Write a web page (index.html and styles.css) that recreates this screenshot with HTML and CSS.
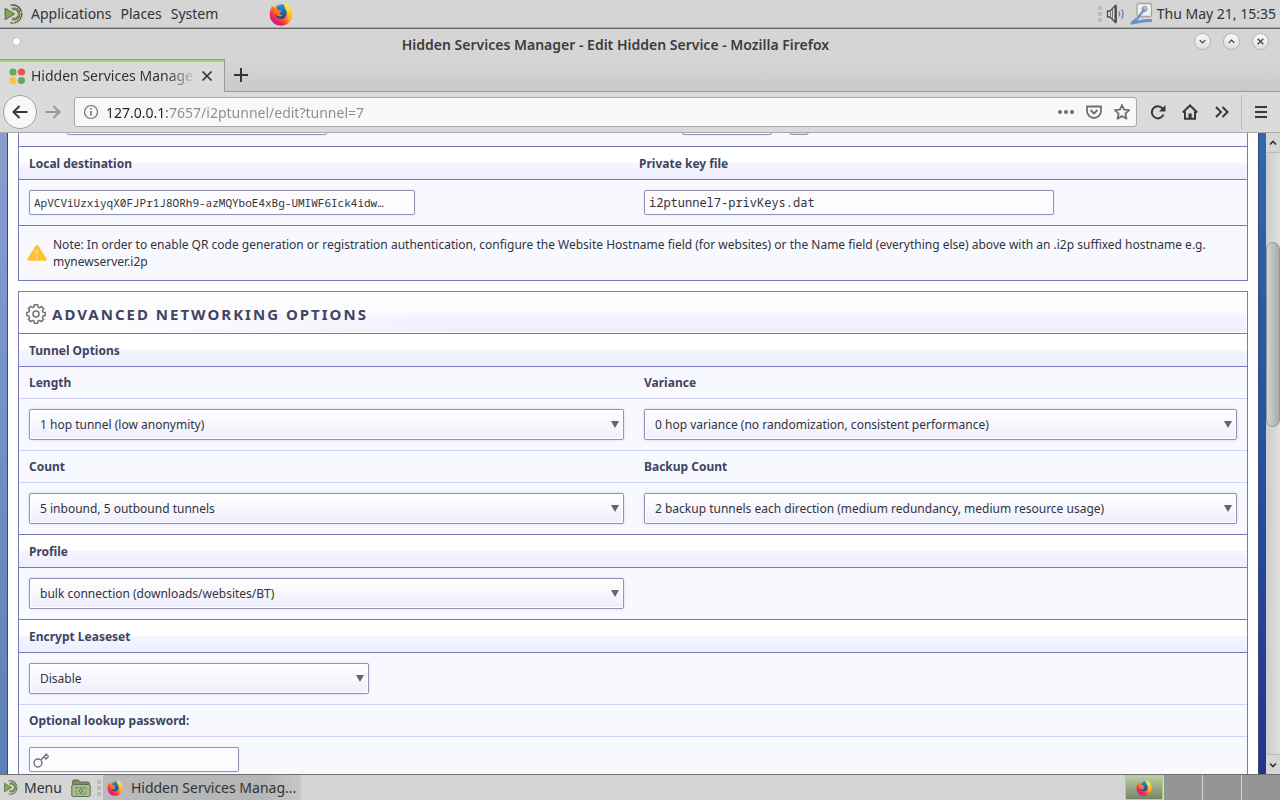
FILE: index.html
```html
<!DOCTYPE html>
<html lang="en">
<head>
<meta charset="utf-8">
<title>Hidden Services Manager - Edit Hidden Service</title>
<link rel="stylesheet" href="styles.css">
</head>
<body>
<svg class="defs" aria-hidden="true">
  <defs>
    <linearGradient id="flame" x1="0.85" y1="0.1" x2="0.2" y2="0.9">
      <stop offset="0" stop-color="#fff24a"/><stop offset="0.3" stop-color="#ffb627"/><stop offset="0.55" stop-color="#ff6a2b"/><stop offset="0.8" stop-color="#f5274f"/><stop offset="1" stop-color="#c01a9a"/>
    </linearGradient>
    <linearGradient id="globe" x1="0" y1="0" x2="0" y2="1">
      <stop offset="0" stop-color="#1c9cf0"/><stop offset="1" stop-color="#123a8c"/>
    </linearGradient>
    <linearGradient id="sun" x1="0" y1="0" x2="0" y2="1">
      <stop offset="0" stop-color="#fff04a"/><stop offset="1" stop-color="#ff9d1e"/>
    </linearGradient>
  </defs>
  <symbol id="firefox" viewBox="0 0 24 24">
    <path d="M2.6 3.2 4.8 5.6 6.4 4.6 8 2.2 10 4.2 16 1C20.500 3 23.500 7.500 23.300 12.500A11.300 11.300 0 0 1 .7 12.500C.7 9 1.600 7 2.600 5.500z" fill="url(#flame)"/>
    <path d="M8 4.500C10 2.600 13.500 1.600 15.500 2.800 15 5 17 6.500 17.600 9.500 18.200 14 15 17 11.800 16.800 8.500 16.600 6.800 14.500 6.600 12.500L10.500 12.200 11.800 9.600 8 8z" fill="url(#globe)"/>
    <path d="M15.500.8C20.500 2.500 23.500 7 23.300 12.500 23 16.500 20.500 20 17.500 21.200 20 17 19.800 12.500 18 9.500 17 7.500 14.500 5 15.500.8z" fill="url(#sun)"/>
    <path d="M4.800 8C6.500 6.300 8.500 7 9.300 8L12.300 8.600C12.500 10 10.800 10.600 10.200 11.200 9.800 12.300 11 13.500 14 12.400 13 15 9.500 15 7.500 13z" fill="#ff7c24"/>
  </symbol>
  <symbol id="mate" viewBox="0 0 20 20">
    <path d="M6 1.300A9 9 0 1 1 6 18.700" fill="none" stroke="#55663f" stroke-width="1.500" stroke-dasharray="14 1"/>
    <path d="M7.500 5.200A5.200 5.200 0 1 1 7.500 14.800" fill="none" stroke="#55663f" stroke-width="2.600"/>
    <path d="M7.500 5.200A5.200 5.200 0 1 1 7.500 14.800" fill="none" stroke="#8db05c" stroke-width="1"/>
    <path d="M.7 4.200 10 10 .7 15.800z" fill="#87a556" stroke="#55663f" stroke-width="1"/>
  </symbol>
</svg>

<header class="desktop-panel">
  <nav class="desktop-menu">
    <svg class="mate-icon"><use href="#mate"/></svg>
    <button>Applications</button><button>Places</button><button>System</button>
  </nav>
  <button class="launcher" aria-label="Firefox"><svg><use href="#firefox"/></svg></button>
  <div class="tray">
    <span class="grip"><i></i><i></i><i></i></span>
    <svg class="tray-icon" viewBox="0 0 20 20">
      <path d="M1.500 7H4L9.500 1.500V18.500L4 13H1.500z" fill="#ddd" stroke="#4b4d48" stroke-width="1.300"/>
      <path d="M4.500 7V13M6.500 5V15" stroke="#72746c"/><path d="M9.700 1.500V18.500" stroke="#4b4d48" stroke-width="2.400"/>
      <path d="M13 7.500Q14.500 10 13 12.500M15.500 5.500Q18.500 10 15.500 14.500" fill="none" stroke="#5f84b8" stroke-width="1.300"/>
    </svg>
    <svg class="pen-icon" viewBox="0 0 24 24">
      <rect x="7" y="1.500" width="14.500" height="13" rx="1.500" fill="#f0f0ee" stroke="#a5a5a3" stroke-width="1.300"/>
      <circle cx="14.500" cy="7" r="2.500" fill="#ccc" stroke="#888"/>
      <path d="M14.500 7 7 17" fill="none" stroke="#6b93c4" stroke-width="2.400"/>
      <path d="M7 17 2 21C8 20.500 13 18 22 18.500" fill="none" stroke="#6b93c4" stroke-width="3" stroke-linejoin="round"/>
    </svg>
    <time>Thu May 21, 15:35</time>
  </div>
</header>

<div class="titlebar">
  <span class="pin"></span>
  <h1>Hidden Services Manager - Edit Hidden Service - Mozilla Firefox</h1>
  <div class="window-buttons">
    <button aria-label="Minimize"><svg viewBox="0 0 16 16"><path d="M5 6.500 8 9.500 11 6.500"/></svg></button>
    <button aria-label="Maximize"><svg viewBox="0 0 16 16"><path d="M5 9.500 8 6.500 11 9.500"/></svg></button>
    <button aria-label="Close"><svg viewBox="0 0 16 16"><path d="M5 5 11 11M11 5 5 11"/></svg></button>
  </div>
</div>

<div class="tabs">
  <div class="tab">
    <svg class="favicon" viewBox="0 0 16 16"><circle cx="4" cy="4" r="3.600" fill="#60ab60"/><circle cx="12.500" cy="4" r="3.600" fill="#e3564a"/><circle cx="4" cy="12.500" r="3.600" fill="#fdc436"/><circle cx="12.500" cy="12.500" r="3.600" fill="#60ab60"/></svg>
    <span class="tab-title">Hidden Services Manage</span>
    <button aria-label="Close tab"><svg viewBox="0 0 16 16"><path d="M3.500 3.500 12.500 12.500M12.500 3.500 3.500 12.500"/></svg></button>
  </div>
  <button class="new-tab" aria-label="New tab"><svg viewBox="0 0 16 16"><path d="M8 1V15M1 8H15"/></svg></button>
</div>

<div class="toolbar">
  <button class="back" aria-label="Back"><svg viewBox="0 0 16 16"><path d="M15.500 8H1.500M7.500 2 1.500 8 7.500 14"/></svg></button>
  <button class="forward" aria-label="Forward" disabled><svg viewBox="0 0 16 16"><path d="M.5 8H14.500M8.500 2 14.500 8 8.500 14"/></svg></button>
  <div class="url-box">
    <svg viewBox="0 0 16 16"><circle cx="8" cy="8" r="6.500" stroke-width="1.200"/><path d="M8 7V11.500M8 4V5.600" stroke-width="1.600"/></svg>
    <input class="url" aria-label="Address" value="127.0.0.1:7657/i2ptunnel/edit?tunnel=7">
    <button aria-label="Page actions"><svg viewBox="0 0 16 16"><g fill="#6f6f6f" stroke="none"><circle cx="2" cy="8" r="2"/><circle cx="8" cy="8" r="2"/><circle cx="14" cy="8" r="2"/></g></svg></button>
    <button aria-label="Pocket"><svg viewBox="0 0 16 16"><path d="M1 2.500H15V7A7 7 0 0 1 1 7zM4.500 6 8 9.500 11.500 6" stroke-linejoin="round"/></svg></button>
    <button aria-label="Bookmark"><svg viewBox="0 0 16 16"><path d="M8 1 10.100 5.600 15.200 6.200 11.400 9.600 12.500 14.700 8 12.100 3.500 14.700 4.600 9.600.8 6.200 5.900 5.600z" stroke-linejoin="round"/></svg></button>
  </div>
  <div class="tools">
    <button aria-label="Reload"><svg viewBox="0 0 16 16"><path d="M13.500 10.500A6 6 0 1 1 12.500 4.500L14 6.300" /><path d="M15.500 1V7.500H9z" fill="#393939" stroke="none"/></svg></button>
    <button aria-label="Home"><svg viewBox="0 0 16 16"><path d="M.8 8.500 8 1.500 15.200 8.500M3 7.500V14.800H13V7.500"/><path d="M6.500 15V9.500H9.700V15z" fill="#393939" stroke="none"/></svg></button>
    <button aria-label="More tools"><svg viewBox="0 0 16 16"><path d="M2 3 7 8 2 13M8.500 3 13.500 8 8.500 13"/></svg></button>
  </div>
  <button class="app-menu" aria-label="Menu"><svg viewBox="0 0 16 16"><path d="M2 3H14M2 8H14M2 13H14"/></svg></button>
</div>

<div class="viewport">
  <main class="page">
    <section class="panel">
      <div class="row previous">
        <div class="cell"><input class="field host" aria-label="Host"></div>
        <div class="cell"><input class="field port" aria-label="Port"><input type="checkbox" class="ssl" aria-label="Use SSL"></div>
      </div>
      <div class="row bar">
        <label for="dest">Local destination</label>
        <label for="key" class="pulled">Private key file</label>
      </div>
      <div class="row">
        <div class="cell"><input class="field dest" id="dest" readonly value="ApVCViUzxiyqX0FJPr1J8ORh9-azMQYboE4xBg-UMIWF6Ick4idw…"></div>
        <div class="cell"><input class="field key" id="key" value="i2ptunnel7-privKeys.dat"></div>
      </div>
      <div class="note">
        <svg viewBox="0 0 20 20"><path d="M10 3 18.500 16.500H1.500z" fill="#ffc233" stroke="#ffc233" stroke-width="2.500" stroke-linejoin="round"/><path d="M10 6.500V11.500M10 13V15" stroke="#e8d9b8" stroke-width="1.800"/></svg>
        <p>Note: In order to enable QR code generation or registration authentication, configure the Website Hostname field (for websites) or the Name field (everything else) above with an .i2p suffixed hostname e.g. mynewserver.i2p</p>
      </div>
    </section>

    <section class="panel">
      <h2>
        <svg viewBox="0 0 20 20"><path d="M8.300.8H11.700L12.200 3.200 13.500 3.800 15.600 2.500 17.700 4.700 16.400 6.700 17 8.200 19.300 8.600V11.500L17 12 16.400 13.500 17.600 15.400 15.400 17.600 13.500 16.400 12 17 11.600 19.300H8.500L8 17 6.500 16.400 4.600 17.600 2.400 15.400 3.600 13.500 3 12 .7 11.500V8.500L3 8.100 3.600 6.500 2.400 4.600 4.600 2.400 6.500 3.600 7.900 3z" stroke-linejoin="round"/><circle cx="10" cy="10" r="3"/></svg>
        Advanced Networking Options
      </h2>
      <div class="row bar"><h3>Tunnel Options</h3></div>
      <div class="row names">
        <label for="length">Length</label><label for="variance">Variance</label>
      </div>
      <div class="row">
        <div class="cell"><span class="select"><select id="length"><option>1 hop tunnel (low anonymity)</option></select></span></div>
        <div class="cell"><span class="select"><select id="variance"><option>0 hop variance (no randomization, consistent performance)</option></select></span></div>
      </div>
      <div class="row names">
        <label for="count">Count</label><label for="backup">Backup Count</label>
      </div>
      <div class="row">
        <div class="cell"><span class="select"><select id="count"><option>5 inbound, 5 outbound tunnels</option></select></span></div>
        <div class="cell"><span class="select"><select id="backup"><option>2 backup tunnels each direction (medium redundancy, medium resource usage)</option></select></span></div>
      </div>
      <div class="row bar"><label for="profile">Profile</label></div>
      <div class="row">
        <div class="cell"><span class="select"><select id="profile"><option>bulk connection (downloads/websites/BT)</option></select></span></div>
      </div>
      <div class="row bar"><label for="encrypt">Encrypt Leaseset</label></div>
      <div class="row">
        <div class="cell"><span class="select short"><select id="encrypt"><option>Disable</option></select></span></div>
      </div>
      <div class="row names"><label for="password">Optional lookup password:</label></div>
      <div class="row">
        <div class="cell"><span class="secret">
          <input type="password" class="field" id="password">
          <svg viewBox="0 0 16 16"><circle cx="5" cy="11" r="4"/><path d="M8 8 14 1.500M11 4.800 13 7 15.500 4.500 13.200 2.300"/></svg>
        </span></div>
      </div>
    </section>
  </main>
  <div class="scrollbar" aria-hidden="true">
    <span class="step"><svg viewBox="0 0 8 8"><path d="M1 5.500 4 2.500 7 5.500"/></svg></span>
    <span class="track"><span class="thumb"></span></span>
    <span class="step"><svg viewBox="0 0 8 8"><path d="M1 2.500 4 5.500 7 2.500"/></svg></span>
  </div>
</div>

<footer class="taskbar">
  <button class="menu-button"><svg><use href="#mate"/></svg>Menu</button>
  <button class="files" aria-label="Files"><svg viewBox="0 0 20 18"><path d="M1.500 4V2.500Q1.500 1 3 1H7.500L9 3H17Q18.500 3 18.500 4.500V6H1.500z" fill="#75935d" stroke="#5c7050"/><rect x=".8" y="5.500" width="18.400" height="12" rx="1.500" fill="#a5bf8f" stroke="#5c7050"/><rect x="5" y="8.500" width="10" height="6.500" fill="none" stroke="#5f774e" stroke-dasharray="2 1.500"/><circle cx="10" cy="11.700" r="1.700" fill="none" stroke="#5f774e"/></svg></button>
  <span class="grip"><i></i><i></i><i></i></span>
  <button class="task"><svg><use href="#firefox"/></svg><span>Hidden Services Manag...</span></button>
  <div class="workspaces">
    <button class="current" aria-label="Workspace 1"><svg><use href="#firefox"/></svg></button>
    <button aria-label="Workspace 2"></button><button aria-label="Workspace 3"></button><button aria-label="Workspace 4"></button>
  </div>
</footer>
</body>
</html>
```
FILE: styles.css
```css
* { box-sizing: border-box; }

body {
  margin: 0;
  height: 100vh;
  display: flex;
  flex-direction: column;
  overflow: hidden;
  background: #d6d6d6;
  color: #2e3436;
  font: 15px/20px "Noto Sans", sans-serif;
}

button {
  display: flex;
  align-items: center;
  justify-content: center;
  margin: 0;
  padding: 0;
  border: 0;
  background: none;
  color: inherit;
  font: inherit;
}

svg { flex: none; display: block; }
.defs { position: absolute; width: 0; height: 0; }

/* desktop panel */
.desktop-panel {
  flex: none;
  display: flex;
  align-items: center;
  height: 28px;
  padding: 0 4px;
  background: #d5d5d5;
  border-bottom: 1px solid #aaa;
  font-size: 14px;
}
.desktop-menu { display: flex; align-items: center; gap: 9px; }
.mate-icon { width: 21px; height: 20px; margin-right: -3px; }
.launcher { margin-left: 51px; }
.launcher svg { width: 24px; height: 24px; }
.tray { display: flex; align-items: center; margin-left: auto; }
.grip { display: grid; gap: 2px; }
.grip i { width: 4px; height: 4px; background: #bcbcbc; }
.tray-icon { width: 20px; height: 20px; margin-left: 4px; }
.pen-icon { width: 24px; height: 24px; margin: 0 3px 0 4px; }

/* window title */
.titlebar {
  flex: none;
  display: grid;
  grid-template-columns: 1fr auto 1fr;
  align-items: center;
  height: 31px;
  border-top: 1px solid #666;
  padding: 0 11px 0 12px;
  background: #d5d5d5;
}
.pin { width: 9px; height: 9px; margin-bottom: 6px; border: 1px solid #bbb; border-radius: 50%; background: #fff; }
.titlebar h1 { margin: 2px 50px 0 0; font-size: 14px; line-height: 20px; font-weight: 600; color: #3c3c3c; }
.window-buttons { display: flex; justify-content: flex-end; gap: 12px; margin-bottom: 5px; }
.window-buttons button {
  width: 17px;
  height: 17px;
  border: 1px solid #b0b0b0;
  border-radius: 50%;
  background: linear-gradient(#fafafa, #dedede);
}
.window-buttons svg { width: 15px; height: 15px; fill: none; stroke: #444; stroke-width: 1.4; }

/* tabs */
.tabs { flex: none; display: flex; height: 33px; background: linear-gradient(#d5d5d5, #c9c9c9); }
.tabs::after { content: ""; flex: 1; border-bottom: 1px solid #999; }
.tab {
  display: flex;
  align-items: center;
  width: 225px;
  padding: 0 9px;
  border-top: 1px solid #999;
  border-right: 1px solid #999;
  background: #dadada;
  box-shadow: inset 0 2px #a9cd7f;
}
.favicon { width: 16px; height: 16px; }
.tab-title {
  flex: 1;
  margin: 0 2px 0 6px;
  white-space: nowrap;
  font-size: 14px;
  -webkit-mask-image: linear-gradient(90deg, #000 82%, transparent);
  mask-image: linear-gradient(90deg, #000 82%, transparent);
}
.tab button svg { width: 16px; height: 16px; stroke: #333; stroke-width: 1.7; }
.new-tab { width: 31px; border-bottom: 1px solid #999; }
.new-tab svg { width: 16px; height: 16px; stroke: #333; stroke-width: 2; }

/* navigation */
.toolbar {
  flex: none;
  display: flex;
  align-items: center;
  height: 41px;
  padding: 0 0 0 3px;
  background: #dbdbdb;
  border-bottom: 1px solid #aaa;
}
.toolbar svg { width: 16px; height: 16px; fill: none; stroke: #393939; stroke-width: 2; }
.back { width: 34px; height: 34px; border: 1px solid #a2a2a2; border-radius: 50%; background: #f8f8f8; }
.forward { margin: 0 13px 0 8px; }
.forward svg { stroke: #989898; }
.url-box {
  flex: 1;
  display: flex;
  align-items: center;
  gap: 12px;
  height: 30px;
  padding: 0 6px 0 8px;
  border: 1px solid #a8a8a8;
  border-radius: 3px;
  background: #f8f8f8;
}
.toolbar .url-box svg { stroke: #6f6f6f; stroke-width: 1.8; }
.url {
  flex: 1;
  min-width: 0;
  margin-left: -5px;
  padding: 2px 0 0;
  border: 0;
  outline: 0;
  font: 14px/20px "Noto Sans", sans-serif;
  color: transparent;
  background: linear-gradient(90deg, #222 61px, #8c8c8c 61px);
  -webkit-background-clip: text;
  background-clip: text;
}
.tools { display: flex; gap: 16px; padding: 0 11px 0 13px; }
.app-menu { width: 39px; height: 34px; border-left: 1px solid #b9b9b9; }

/* web page */
.viewport { flex: 1; min-height: 0; display: flex; overflow: hidden; }
.page {
  flex: 1;
  min-width: 0;
  display: flex;
  flex-direction: column;
  padding: 0 8px;
  color: #33333c;
  font-size: 12px;
  line-height: 17px;
  background:
    linear-gradient(#8b9dcf, #7292c5 45%, #5b7fb8) left / 50% 100% no-repeat,
    linear-gradient(#2e69ad, #2254a2 48%, #22348f) right / 50% 100% no-repeat;
}
.panel {
  flex: none;
  margin: 0 10px 10px;
  border: 1px solid #7778c0;
  outline: 10px solid #fff;
  background: #f8f9ff;
  box-shadow: 0 0 0 11px #454573;
  clip-path: inset(-10px -11px);
}
.panel:first-child { border-top: 0; }
.row { display: grid; grid-template-columns: 615fr 613fr; border-top: 1px solid #7778c0; }
.cell { padding: 10px; display: flex; align-items: center; }
.names { border-top-color: #cfd0f8; }
.names + .row { border-top-color: #cfd0f8; }
.row label, .row h3 { margin: 0; padding: 7px 10px; font-size: 12px; line-height: 17px; font-weight: 700; color: #41445f; }
.bar { background: linear-gradient(#fff 50%, #f5f5ff 50%, #eeedfd); }
.row.bar label, .row.bar h3 { padding: 8px 10px 7px; }
.row.bar .pulled { padding-left: 5px; }
.bar + .names { border-top-color: #7778c0; }

.field {
  height: 25px;
  padding: 0 4px;
  border: 1px solid #9292b5;
  border-radius: 2px;
  background: #fcfcff;
  box-shadow: 0 0 2px #d8d8f6;
  color: #33333c;
  font: 12px/17px "Noto Sans Mono", "DejaVu Sans Mono", monospace;
}
.previous { margin-top: -33px; border-top: 0; }
.previous .cell { padding-bottom: 11px; }
.host { width: 260px; margin-left: 38px; }
.port { width: 90px; margin-left: 38px; }
.ssl { appearance: none; width: 20px; height: 25px; margin: 0 0 0 17px; border: 1px solid #9292b5; border-radius: 3px; background: #dcdcf0; align-self: flex-end; }
.dest { width: 386px; font-size: 11px; }
.key { width: 410px; }

.note { display: flex; align-items: center; gap: 6px; padding: 10px 8px; border-top: 1px solid #7778c0; }
.note svg { width: 20px; height: 20px; }
.note p { margin: 0; }

.panel h2 {
  display: flex;
  align-items: center;
  gap: 6px;
  height: 41px;
  margin: 0;
  padding: 2px 6px 0;
  border: 1px solid #fff;
  background:
    linear-gradient(90deg, #fcfcff 8%, #fcfcff00 36%),
    linear-gradient(#fcfcff 51%, #f5f5ff 51%, #eeedfd);
  color: #41445f;
  font-size: 15px;
  line-height: 22px;
  letter-spacing: 2px;
  text-transform: uppercase;
}
.panel h2 svg { width: 20px; height: 20px; fill: none; stroke: #747474; stroke-width: 1.5; }

.select { position: relative; flex: 1; }
.select select {
  display: block;
  width: 100%;
  height: 31px;
  padding: 0 24px 0 10px;
  appearance: none;
  border: 1px solid #9292b5;
  border-radius: 2px;
  background: linear-gradient(#fff, #efeefd);
  box-shadow: inset 0 0 0 1px #fff, 0 0 3px #d0d0f4;
  color: #33333c;
  font: 12px/17px "Noto Sans", sans-serif;
}
.select::after {
  content: "";
  position: absolute;
  right: 5px;
  top: 12px;
  border: 4px solid transparent;
  border-top: 7px solid #666;
  border-bottom: 0;
  pointer-events: none;
}
.short { flex: none; width: 340px; }
.secret { position: relative; }
.secret .field { display: block; width: 210px; padding-left: 24px; }
.secret svg { position: absolute; left: 4px; top: 5px; width: 16px; height: 16px; fill: none; stroke: #707078; stroke-width: 1.4; }

/* scrollbar */
.scrollbar { flex: none; width: 14px; display: flex; flex-direction: column; background: #d8d8d8; }
.step { height: 19px; display: grid; place-items: center; background: #d5d5d5; }
.step svg { width: 8px; height: 8px; fill: none; stroke: #333; stroke-width: 1.6; }
.track { flex: 1; display: flex; flex-direction: column; border: solid #bbb; border-width: 1px 0; background: linear-gradient(90deg, #cbcbcb, #dfdfdf); }
.track::before { content: ""; flex: 89; }
.track::after { content: ""; flex: 328; }
.thumb { flex: 184; border: 1px solid #959595; border-radius: 7px; background: linear-gradient(90deg, #d3d3d3, #ababab); }

/* taskbar */
.taskbar {
  flex: none;
  display: flex;
  align-items: center;
  height: 26px;
  padding-left: 4px;
  border-top: 1px solid #707070;
  background: #d5d5d5;
  font-size: 14px;
}
.menu-button { gap: 5px; }
.menu-button svg { width: 15px; height: 15px; }
.files { margin: 0 6px 0 9px; }
.files svg { width: 20px; height: 18px; }
.task { gap: 8px; width: 198px; height: 25px; margin-left: 2px; padding: 0 4px; justify-content: flex-start; background: linear-gradient(90deg, #bababa, #b5b5b5 80%, #c8c8c8); }
.task svg { width: 16px; height: 16px; }
.task span { white-space: nowrap; }
.workspaces { display: flex; gap: 1px; height: 25px; margin-left: auto; background: #d5d5d5; }
.workspaces button { width: 38px; height: 100%; background: #959595; }
.workspaces .current { border: 1px solid #afd089; background: linear-gradient(#b9cfa2, #76836a); }
.workspaces svg { width: 16px; height: 16px; }
```
